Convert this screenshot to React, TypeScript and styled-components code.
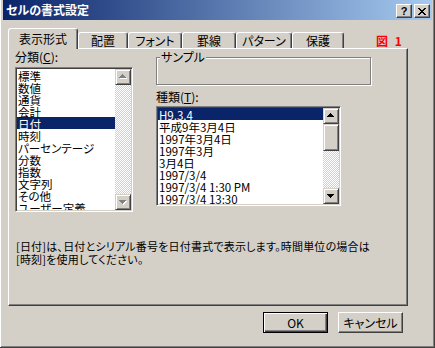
import React from 'react';
import styled, { createGlobalStyle } from 'styled-components';

const FACE = '#d4d0c8';
const NAVY = '#0a246a';

const GlobalStyle = createGlobalStyle`
  html, body {
    margin: 0;
    padding: 0;
    background: ${FACE};
  }
  body {
    font-family: "Noto Sans CJK JP", sans-serif;
    font-size: 12px;
    color: #000;
    font-feature-settings: "palt";
  }
`;

const Window = styled.div`
  width: 435px;
  height: 348px;
  box-sizing: border-box;
  display: flex;
  flex-direction: column;
  padding: 0 2px 2px 3px;
  border-right: 1px solid #404040;
  border-bottom: 1px solid #404040;
  box-shadow: inset 1px 0 #fff, inset -1px -1px #808080;
  background: ${FACE};
  overflow: hidden;
`;

const TitleBar = styled.div`
  height: 20px;
  display: flex;
  align-items: center;
  padding: 2px 2px 0 3px;
  box-sizing: border-box;
  background: linear-gradient(to right, ${NAVY}, #a6caf0);
`;

const Title = styled.div`
  flex: 1;
  color: #fff;
  font-weight: bold;
  font-size: 12px;
  line-height: 14px;
  margin-top: -2px;
`;

const CaptionButton = styled.div`
  width: 16px;
  height: 14px;
  box-sizing: border-box;
  margin-left: 2px;
  display: flex;
  align-items: center;
  justify-content: center;
  background: ${FACE};
  border: 1px solid;
  border-color: #fff #404040 #404040 #fff;
  box-shadow: inset -1px -1px #808080;
  font-family: "Liberation Sans", sans-serif;
  font-weight: bold;
  font-size: 11px;
  line-height: 12px;
`;

const Body = styled.div`
  padding: 8px 0 0 5px;
  display: flex;
  flex-direction: column;
`;

const TabRow = styled.div`
  display: flex;
  align-items: flex-end;
  height: 20px;
  position: relative;
  z-index: 1;
`;

const Tab = styled.div<{ $active?: boolean; $w: number }>`
  width: ${p => p.$w}px;
  height: ${p => (p.$active ? 21 : 16)}px;
  margin-bottom: ${p => (p.$active ? -1 : 0)}px;
  box-sizing: border-box;
  border: 1px solid;
  border-bottom: none;
  border-color: #fff #404040 transparent #fff;
  border-radius: 3px 3px 0 0;
  box-shadow: inset -1px 0 #808080;
  background: ${FACE};
  text-align: center;
  line-height: 14px;
  padding-top: ${p => (p.$active ? 3 : 1)}px;
  white-space: nowrap;
`;

const Marker = styled.span`
  margin-left: 32px;
  color: #f00;
  font-weight: bold;
  line-height: 14px;
  letter-spacing: 2px;
`;

const Panel = styled.div`
  width: 400px;
  height: 258px;
  box-sizing: border-box;
  border: 1px solid;
  border-color: #fff #404040 #404040 #fff;
  box-shadow: inset -1px -1px #808080;
  padding: 1px 6px 0 6px;
`;

const Columns = styled.div`
  display: grid;
  grid-template-columns: 118px 215px;
  column-gap: 23px;
  align-items: start;
`;

const Column = styled.div`
  display: flex;
  flex-direction: column;
`;

const Label = styled.div`
  line-height: 14px;
  height: 14px;
  white-space: nowrap;
`;

const Accel = styled.span`
  text-decoration: underline;
`;

const Group = styled.div`
  margin-top: 7px;
  height: 28px;
  box-sizing: border-box;
  border: 1px solid #808080;
  box-shadow: 1px 1px 0 #fff, inset 1px 1px 0 #fff;
`;

const GroupTitle = styled.span`
  display: inline-block;
  margin: -8px 0 0 3px;
  padding: 0 1px;
  background: ${FACE};
  line-height: 14px;
  vertical-align: top;
`;

const ListBox = styled.div<{ $w: number; $h: number }>`
  width: ${p => p.$w}px;
  height: ${p => p.$h}px;
  box-sizing: border-box;
  display: flex;
  padding: 1px;
  border: 1px solid;
  border-color: #808080 #fff #fff #808080;
  box-shadow: inset 1px 1px #404040, inset -1px -1px ${FACE};
  background: #fff;
`;

const Items = styled.div`
  flex: 1;
  overflow: hidden;
`;

const Row = styled.div<{ $selected?: boolean }>`
  height: 12px;
  line-height: 14px;
  font-size: 11.5px;
  padding-left: 1px;
  white-space: nowrap;
  background: ${p => (p.$selected ? NAVY : 'transparent')};
  color: ${p => (p.$selected ? '#fff' : '#000')};
`;

const ScrollBar = styled.div`
  width: 16px;
  display: flex;
  flex-direction: column;
`;

const Raised = styled.div<{ $h?: number }>`
  height: ${p => p.$h ?? 16}px;
  box-sizing: border-box;
  flex-shrink: 0;
  display: flex;
  align-items: center;
  justify-content: center;
  background: ${FACE};
  border: 1px solid;
  border-color: ${FACE} #404040 #404040 ${FACE};
  box-shadow: inset 1px 1px #fff, inset -1px -1px #808080;
`;

const Track = styled.div`
  flex: 1;
  background-color: #fff;
  background-image: conic-gradient(${FACE} 25%, #fff 0 50%, ${FACE} 0 75%, #fff 0);
  background-size: 2px 2px;
`;

const Description = styled.div`
  margin-top: 28px;
  line-height: 13px;
  font-size: 11px;
  letter-spacing: 0.2px;
  padding-left: 1px;
`;

const Footer = styled.div`
  width: 400px;
  box-sizing: border-box;
  display: flex;
  justify-content: flex-end;
  gap: 10px;
  padding-right: 5px;
  margin-top: 6px;
`;

const Button = styled.div<{ $default?: boolean }>`
  width: 65px;
  height: 21px;
  box-sizing: border-box;
  display: flex;
  align-items: center;
  justify-content: center;
  background: ${FACE};
  border: 1px solid;
  border-color: ${p => (p.$default ? '#000' : '#fff #404040 #404040 #fff')};
  box-shadow: ${p =>
    p.$default
      ? 'inset 1px 1px #fff, inset -1px -1px #404040, inset -2px -2px #808080'
      : 'inset -1px -1px #808080'};
  line-height: 14px;
`;

function Pixels({ rows, color, dx = 0, dy = 0 }: { rows: string[]; color: string; dx?: number; dy?: number }) {
  const rects: React.ReactNode[] = [];
  rows.forEach((r, y) =>
    r.split('').forEach((c, x) => {
      if (c === '#') rects.push(<rect key={`${x}-${y}`} x={x + dx} y={y + dy} width={1} height={1} fill={color} />);
    })
  );
  return <>{rects}</>;
}

const UP = ['...#...', '..###..', '.#####.', '#######'];
const DOWN = ['#######', '.#####.', '..###..', '...#...'];
const CLOSE = ['##....##', '.##..##.', '..####..', '...##...', '..####..', '.##..##.', '##....##'];

function Arrow({ down, disabled }: { down?: boolean; disabled?: boolean }) {
  const rows = down ? DOWN : UP;
  return (
    <svg width={8} height={5} shapeRendering="crispEdges" style={{ marginTop: down ? 1 : -1 }}>
      {disabled && <Pixels rows={rows} color="#fff" dx={1} dy={1} />}
      <Pixels rows={rows} color={disabled ? '#808080' : '#000'} />
    </svg>
  );
}

const categories = ['標準', '数値', '通貨', '会計', '日付', '時刻', 'パーセンテージ', '分数', '指数', '文字列', 'その他', 'ユーザー定義'];
const formats = ['H9.3.4', '平成9年3月4日', '1997年3月4日', '1997年3月', '3月4日', '1997/3/4', '1997/3/4 1:30 PM', '1997/3/4 13:30'];
const tabs: [string, number][] = [['表示形式', 70], ['配置', 50], ['フォント', 54], ['罫線', 54], ['パターン', 56], ['保護', 52]];

export default function App() {
  return (
    <>
      <GlobalStyle />
      <Window>
        <TitleBar>
          <Title>セルの書式設定</Title>
          <CaptionButton>?</CaptionButton>
          <CaptionButton>
            <svg width={8} height={7} shapeRendering="crispEdges">
              <Pixels rows={CLOSE} color="#000" />
            </svg>
          </CaptionButton>
        </TitleBar>
        <Body>
          <TabRow>
            {tabs.map(([t, w], i) => (
              <Tab key={t} $w={w} $active={i === 0}>{t}</Tab>
            ))}
            <Marker>図 1</Marker>
          </TabRow>
          <Panel>
            <Columns>
              <Column>
                <Label>分類(<Accel>C</Accel>):</Label>
                <ListBox $w={118} $h={145} style={{ marginTop: 3 }}>
                  <Items>
                    {categories.map(c => (
                      <Row key={c} $selected={c === '日付'}>{c}</Row>
                    ))}
                  </Items>
                  <ScrollBar>
                    <Raised><Arrow disabled /></Raised>
                    <Track />
                    <Raised><Arrow down disabled /></Raised>
                  </ScrollBar>
                </ListBox>
              </Column>
              <Column>
                <Group>
                  <GroupTitle>サンプル</GroupTitle>
                </Group>
                <Label style={{ marginTop: 5 }}>種類(<Accel>T</Accel>):</Label>
                <ListBox $w={185} $h={100} style={{ marginTop: 2 }}>
                  <Items>
                    {formats.map((f, i) => (
                      <Row key={f} $selected={i === 0}>{f}</Row>
                    ))}
                  </Items>
                  <ScrollBar>
                    <Raised><Arrow /></Raised>
                    <Raised $h={27} />
                    <Track />
                    <Raised><Arrow down /></Raised>
                  </ScrollBar>
                </ListBox>
              </Column>
            </Columns>
            <Description>
              [日付]は、日付とシリアル番号を日付書式で表示します。時間単位の場合は
              <br />
              [時刻]を使用してください。
            </Description>
          </Panel>
          <Footer>
            <Button $default>OK</Button>
            <Button>キャンセル</Button>
          </Footer>
        </Body>
      </Window>
    </>
  );
}
